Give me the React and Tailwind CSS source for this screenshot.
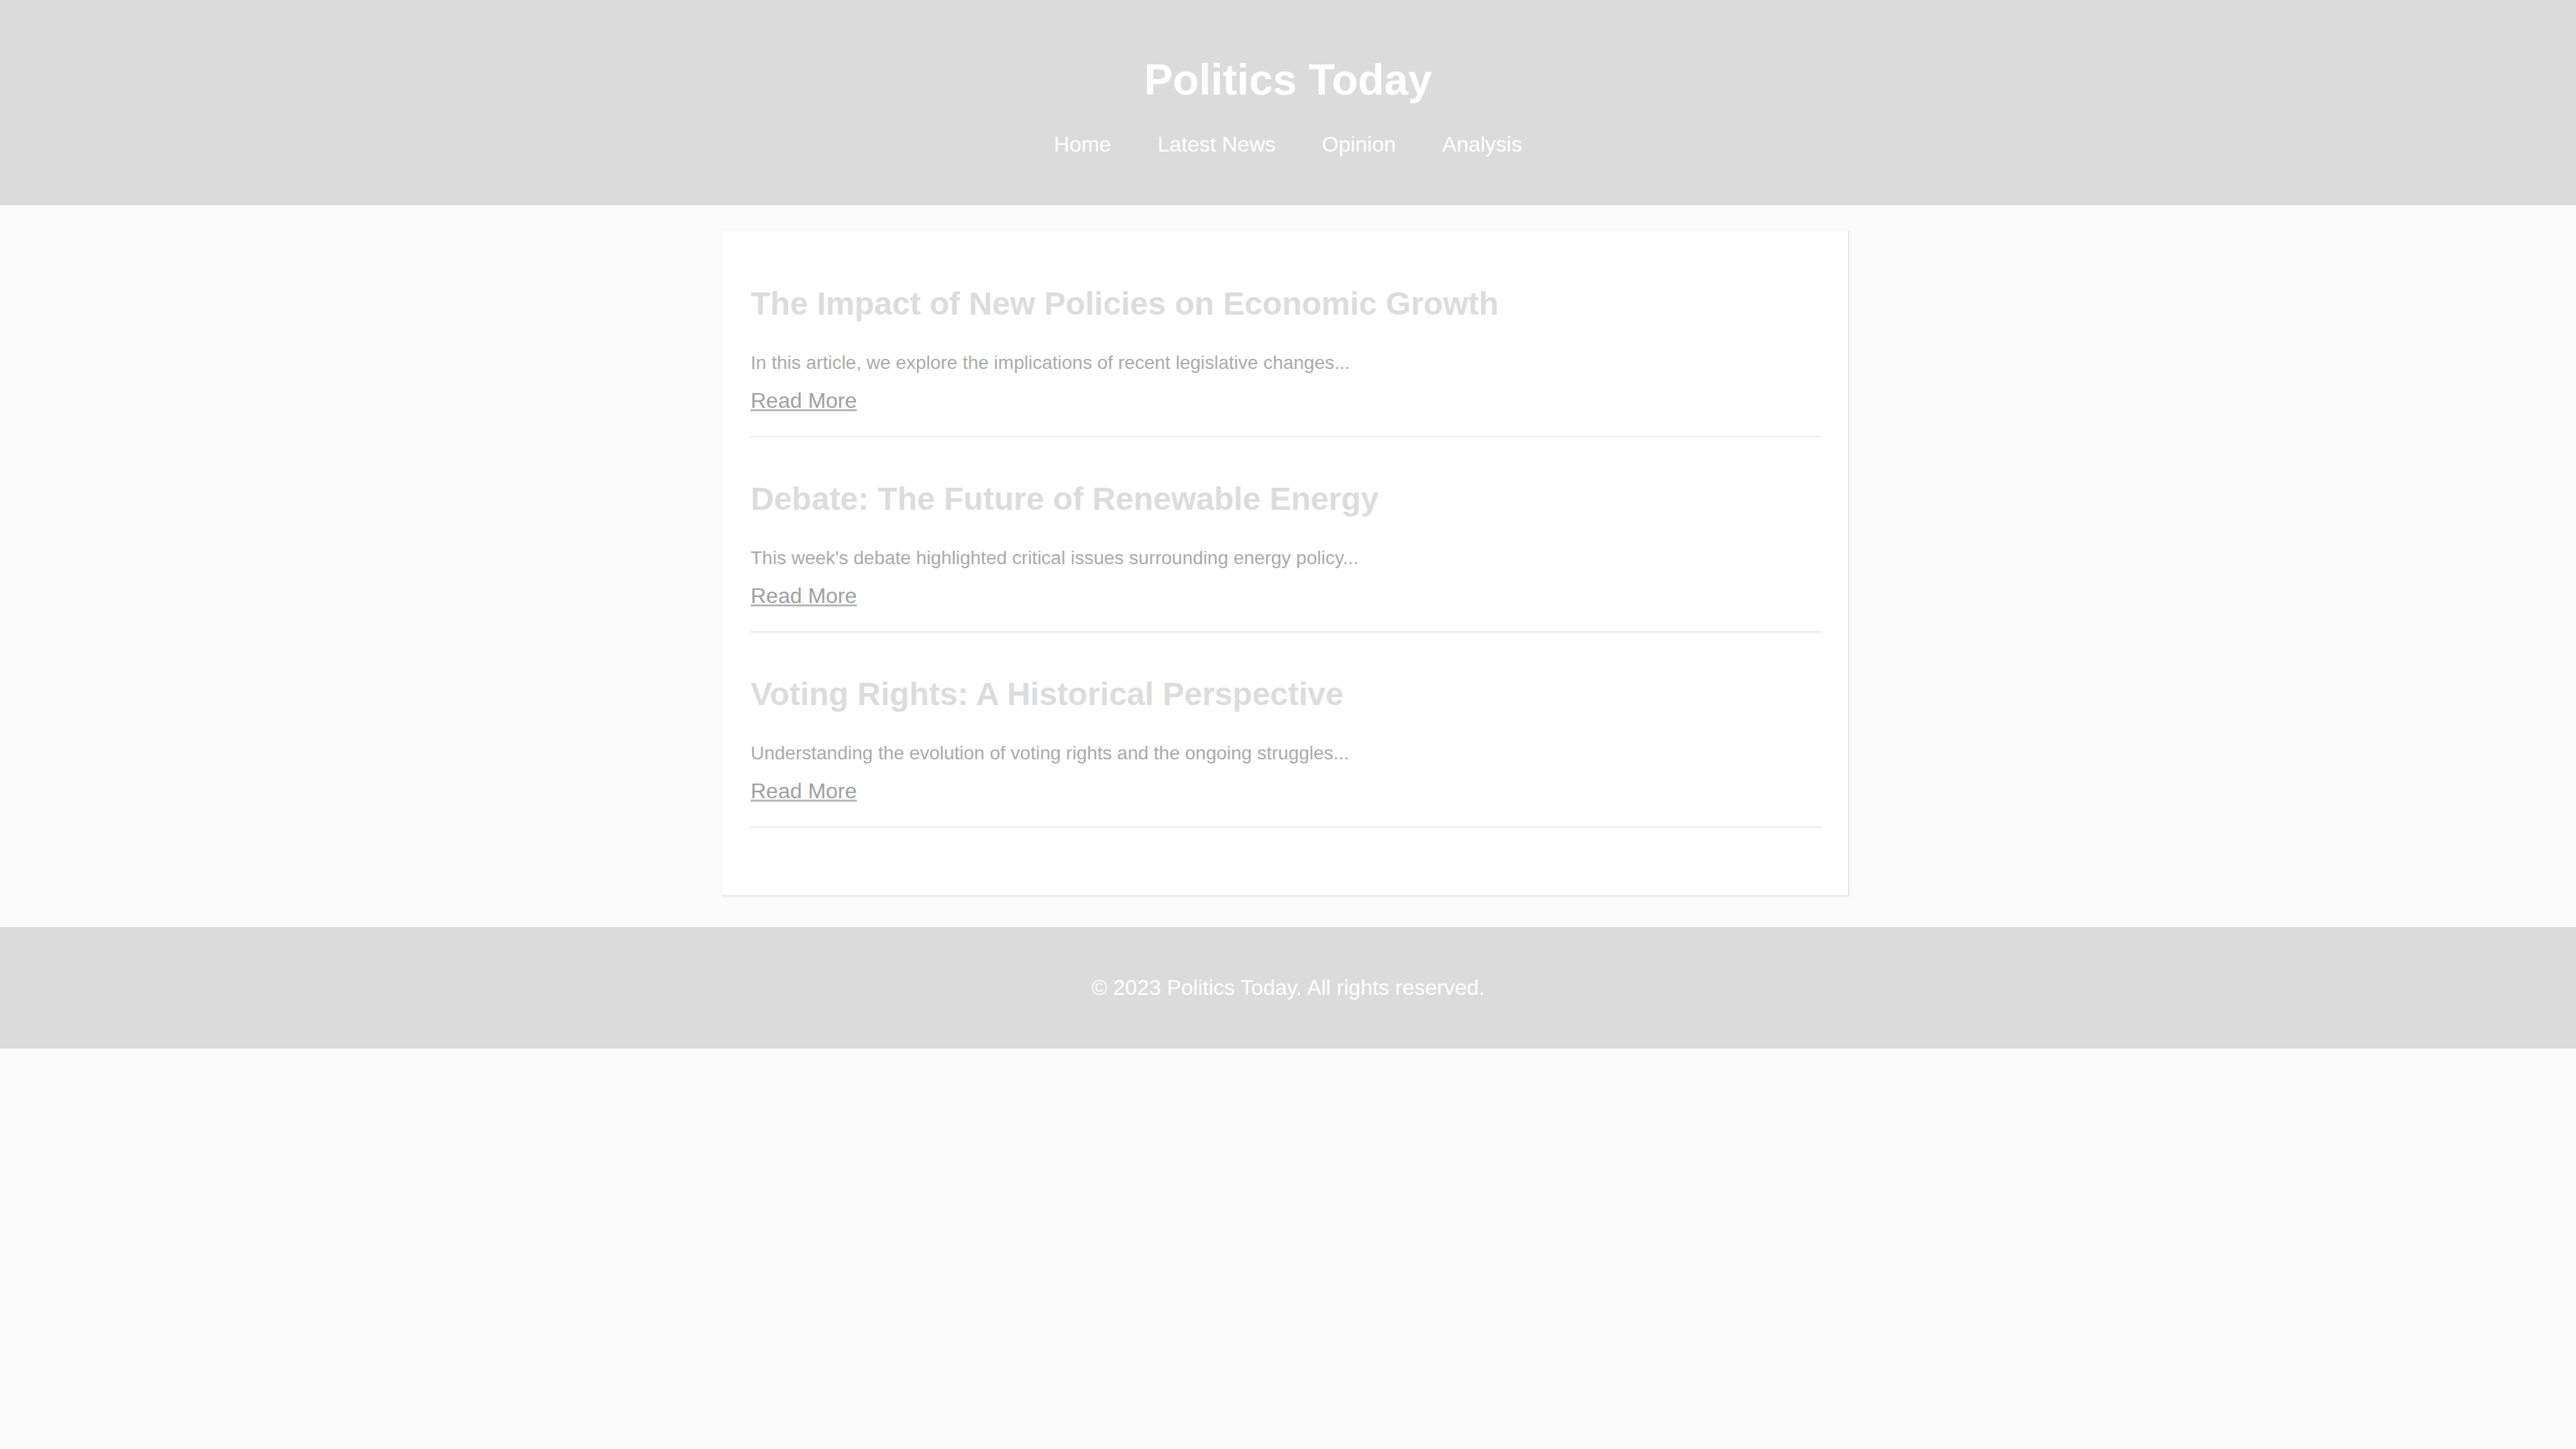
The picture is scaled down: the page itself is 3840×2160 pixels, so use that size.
import React from 'react'

const articles = [
  {
    title: 'The Impact of New Policies on Economic Growth',
    summary: 'In this article, we explore the implications of recent legislative changes...'
  },
  {
    title: 'Debate: The Future of Renewable Energy',
    summary: "This week's debate highlighted critical issues surrounding energy policy..."
  },
  {
    title: 'Voting Rights: A Historical Perspective',
    summary: 'Understanding the evolution of voting rights and the ongoing struggles...'
  }
]

const navLinks = ['Home', 'Latest News', 'Opinion', 'Analysis']

const App = () => {
  return (
    <div className="min-h-screen w-full bg-[#fbfbfb] font-['Liberation_Sans',Arial,sans-serif]">
      {/* Header */}
      <header className="flex flex-col items-center bg-[#dbdbdb] pt-[82px] pb-[72px] text-white">
        <h1 className="text-[64px] font-bold leading-[74px]">Politics Today</h1>
        <nav className="mt-[41px] flex gap-[69px] text-[32px] leading-[37px]">
          {navLinks.map((link) => (
            <a key={link} href="#" className="text-white">
              {link}
            </a>
          ))}
        </nav>
      </header>

      {/* Articles */}
      <main className="flex justify-center pt-[37px] pr-[8px] pb-[46px]">
        <div className="flex w-[1680px] flex-col gap-[64px] border border-[#f3f3f3] border-r-[#d4d4d4] border-b-[#d4d4d4] bg-white pl-[42px] pr-[40px] pt-[81px] pb-[101px] shadow-[3px_3px_6px_rgba(0,0,0,0.02)]">
          {articles.map((article) => (
            <article key={article.title} className="flex flex-col items-start border-b-2 border-[#ebebeb] pb-[34px]">
              <h2 className="text-[48px] font-bold leading-[55px] text-[#dcdcdc]">{article.title}</h2>
              <p className="mt-[45px] text-[28px] leading-[32px] text-[#aaaaaa]">{article.summary}</p>
              <a href="#" className="mt-[22px] text-[32px] leading-[37px] text-[#a0a0a0] underline decoration-[#b8b8b8]">
                Read More
              </a>
            </article>
          ))}
        </div>
      </main>

      {/* Footer */}
      <footer className="bg-[#dbdbdb] py-[72px] text-center text-[32px] leading-[37px] text-white">
        <p>© 2023 Politics Today. All rights reserved.</p>
      </footer>
    </div>
  )
}

export default App
